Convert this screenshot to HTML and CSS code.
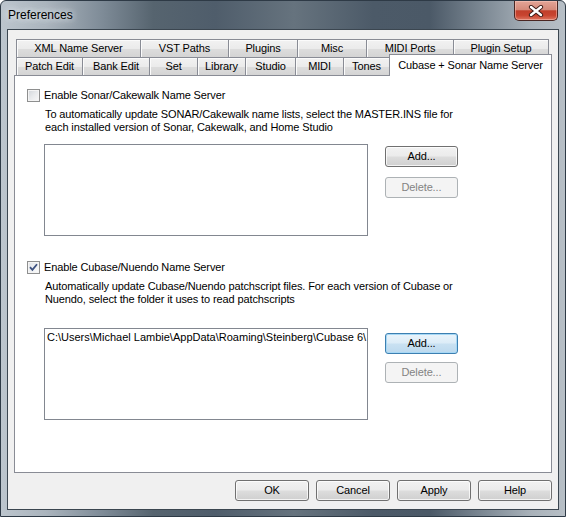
FILE: index.html
```html
<!DOCTYPE html>
<html>
<head>
<meta charset="utf-8">
<title>Preferences</title>
<link rel="stylesheet" href="styles.css">
</head>
<body>
<div class="window">
  <div class="titlebar">
    <span class="title">Preferences</span>
    <div class="close">
      <svg width="16" height="12" viewBox="0 0 16 12">
        <path d="M3 2 L13 10 M13 2 L3 10" stroke="#3a1a16" stroke-width="4.2" stroke-linecap="round"/>
        <path d="M3 2 L13 10 M13 2 L3 10" stroke="#ffffff" stroke-width="2.4" stroke-linecap="round"/>
      </svg>
    </div>
  </div>
  <div class="client">
    <div class="tabs">
      <div class="tab-row">
        <div class="tab w-xml">XML Name Server</div>
        <div class="tab w-vst">VST Paths</div>
        <div class="tab w-plugins">Plugins</div>
        <div class="tab w-misc">Misc</div>
        <div class="tab w-ports">MIDI Ports</div>
        <div class="tab w-setup">Plugin Setup</div>
      </div>
      <div class="tab-row">
        <div class="tab w-patch">Patch Edit</div>
        <div class="tab w-bank">Bank Edit</div>
        <div class="tab w-set">Set</div>
        <div class="tab w-library">Library</div>
        <div class="tab w-studio">Studio</div>
        <div class="tab w-midi">MIDI</div>
        <div class="tab w-tones">Tones</div>
        <div class="tab selected">Cubase + Sonar Name Server</div>
      </div>
    </div>
    <div class="panel">
      <div class="check-row first">
        <span class="checkbox"></span>
        <span class="check-label">Enable Sonar/Cakewalk Name Server</span>
      </div>
      <p class="desc">To automatically update SONAR/Cakewalk name lists, select the MASTER.INS file for<br>each installed version of Sonar, Cakewalk, and Home Studio</p>
      <div class="list-row first-list">
        <div class="listbox"></div>
        <div class="list-buttons">
          <div class="btn">Add...</div>
          <div class="btn disabled">Delete...</div>
        </div>
      </div>

      <div class="check-row second">
        <span class="checkbox checked">
          <svg width="9" height="9" viewBox="0 0 9 9"><path d="M1 4.2 L3.4 6.8 L8 1.2" fill="none" stroke="#3d5180" stroke-width="1.8"/></svg>
        </span>
        <span class="check-label">Enable Cubase/Nuendo Name Server</span>
      </div>
      <p class="desc">Automatically update Cubase/Nuendo patchscript files. For each version of Cubase or<br>Nuendo, select the folder it uses to read patchscripts</p>
      <div class="list-row second-list">
        <div class="listbox">
          <div class="item">C:\Users\Michael Lambie\AppData\Roaming\Steinberg\Cubase 6\</div>
        </div>
        <div class="list-buttons">
          <div class="btn focused">Add...</div>
          <div class="btn disabled">Delete...</div>
        </div>
      </div>
    </div>
    <div class="dialog-buttons">
      <div class="btn wide">OK</div>
      <div class="btn wide">Cancel</div>
      <div class="btn wide">Apply</div>
      <div class="btn wide">Help</div>
    </div>
  </div>
</div>
</body>
</html>
```

FILE: styles.css
```css
html, body {
  margin: 0;
  padding: 0;
  background: #ffffff;
}
body {
  font-family: "Liberation Sans", Arial, sans-serif;
  font-size: 11px;
  letter-spacing: -0.12px;
  color: #000;
}
.window {
  width: 566px;
  height: 517px;
  box-sizing: border-box;
  border: 1px solid #2e3a46;
  border-radius: 6px 6px 0 0;
  background: linear-gradient(to right, #bcc5cd 0%, #aab4bd 8%, #7e8b97 18%, #56646f 27%, #4f5d6b 38%, #66737e 52%, #4c5a68 66%, #4b5967 76%, #7f8b96 86%, #a9b2ba 94%, #b7bfc6 100%);
  display: flex;
  flex-direction: column;
  overflow: hidden;
}
.titlebar {
  height: 28px;
  flex: none;
  display: flex;
  align-items: flex-start;
  padding: 0 7px 0 7px;
}
.title {
  margin-top: 7px;
  font-family: "Liberation Sans", Arial, sans-serif;
  font-size: 12px;
  letter-spacing: 0;
  line-height: 15px;
  color: #000;
  text-shadow: 0 0 6px #e8eef3, 0 0 10px rgba(235,241,246,0.9);
}
.close {
  margin-left: auto;
  width: 42px;
  height: 19px;
  border: 1px solid #4a2622;
  border-top: none;
  border-radius: 0 0 5px 5px;
  background: linear-gradient(to bottom, #e3a597 0%, #d58a7a 45%, #c13f2b 52%, #c8442f 75%, #dd7560 100%);
  box-shadow: inset 0 0 0 1px rgba(255,210,200,0.45);
  display: flex;
  align-items: center;
  justify-content: center;
}
.client {
  flex: 1;
  margin: 0 6px 6px 6px;
  border: 1px solid #3b4650;
  background: #f0f0f0;
  padding: 9px 6px 0 6px;
  display: flex;
  flex-direction: column;
}
.tabs {
  height: 36px;
  padding-left: 2px;
  flex: none;
}
.tab-row {
  display: flex;
  align-items: flex-start;
  height: 18px;
}
.tab {
  box-sizing: border-box;
  height: 18px;
  margin-right: -1px;
  border: 1px solid #898c95;
  border-bottom: none;
  background: linear-gradient(to bottom, #f2f2f2 0%, #ebebeb 50%, #dddddd 51%, #d4d4d4 100%);
  box-shadow: inset 1px 1px 0 #fbfbfb;
  text-align: center;
  line-height: 17px;
  white-space: nowrap;
}
.w-xml { width: 125px; }
.w-vst { width: 89px; }
.w-plugins { width: 70px; }
.w-misc { width: 70px; }
.w-ports { width: 88px; }
.w-setup { width: 96px; }
.w-patch { width: 67px; }
.w-bank { width: 68px; }
.w-set { width: 49px; }
.w-library { width: 49px; }
.w-studio { width: 51px; }
.w-midi { width: 49px; }
.w-tones { width: 47px; }
.tab.selected {
  position: relative;
  z-index: 1;
  width: 163px;
  height: 22px;
  margin-top: -3px;
  background: #ffffff;
  box-shadow: none;
  padding-top: 2px;
  line-height: 17px;
}
.panel {
  box-sizing: border-box;
  height: 398px;
  flex: none;
  border: 1px solid #898c95;
  background: #ffffff;
  padding: 13px 0 0 12px;
}
.check-row {
  display: flex;
  align-items: center;
  height: 13px;
}
.check-row.second {
  margin-top: 25px;
}
.checkbox {
  box-sizing: border-box;
  width: 13px;
  height: 13px;
  border: 1px solid #8e8f8f;
  background: linear-gradient(135deg, #d1d5da 0%, #e8eaec 50%, #f8f8f8 100%);
  box-shadow: inset 0 0 0 1px #f4f4f4;
  display: flex;
  align-items: center;
  justify-content: center;
  flex: none;
}
.checkbox.checked {
  background: linear-gradient(135deg, #e0e3e8 0%, #eef0f2 50%, #fbfbfb 100%);
}
.check-label {
  margin-left: 4px;
  line-height: 13px;
  white-space: nowrap;
}
.desc {
  margin: 6px 0 0 18px;
  line-height: 13px;
  white-space: nowrap;
}
.list-row {
  display: flex;
  align-items: flex-start;
  margin-left: 17px;
}
.list-row.first-list {
  margin-top: 10px;
}
.list-row.second-list {
  margin-top: 22px;
}
.listbox {
  box-sizing: border-box;
  width: 324px;
  height: 92px;
  border: 1px solid #828790;
  background: #ffffff;
  overflow: hidden;
  flex: none;
}
.item {
  padding: 2px 0 0 2px;
  line-height: 13px;
  letter-spacing: 0;
  white-space: nowrap;
}
.list-buttons {
  margin-left: 17px;
  display: flex;
  flex-direction: column;
  gap: 10px;
  padding-top: 2px;
}
.second-list .list-buttons {
  padding-top: 5px;
  gap: 8px;
}
.btn {
  box-sizing: border-box;
  width: 73px;
  height: 21px;
  border: 1px solid #707070;
  border-radius: 3px;
  background: linear-gradient(to bottom, #f2f2f2 0%, #ebebeb 48%, #dddddd 52%, #cfcfcf 100%);
  box-shadow: inset 0 0 0 1px rgba(255,255,255,0.75);
  text-align: center;
  line-height: 19px;
  color: #000;
}
.btn.focused {
  border-color: #3c7fb1;
  background: linear-gradient(to bottom, #eaf4fb 0%, #dcecf7 48%, #c9e1f2 52%, #bcd9ee 100%);
  box-shadow: inset 0 0 0 1px #a7d8f5;
}
.btn.disabled {
  border-color: #adb2b5;
  background: #f4f4f4;
  box-shadow: none;
  color: #838383;
}
.dialog-buttons {
  margin-top: 7px;
  display: flex;
  justify-content: flex-end;
  gap: 7px;
}
.btn.wide {
  width: 74px;
}
```
